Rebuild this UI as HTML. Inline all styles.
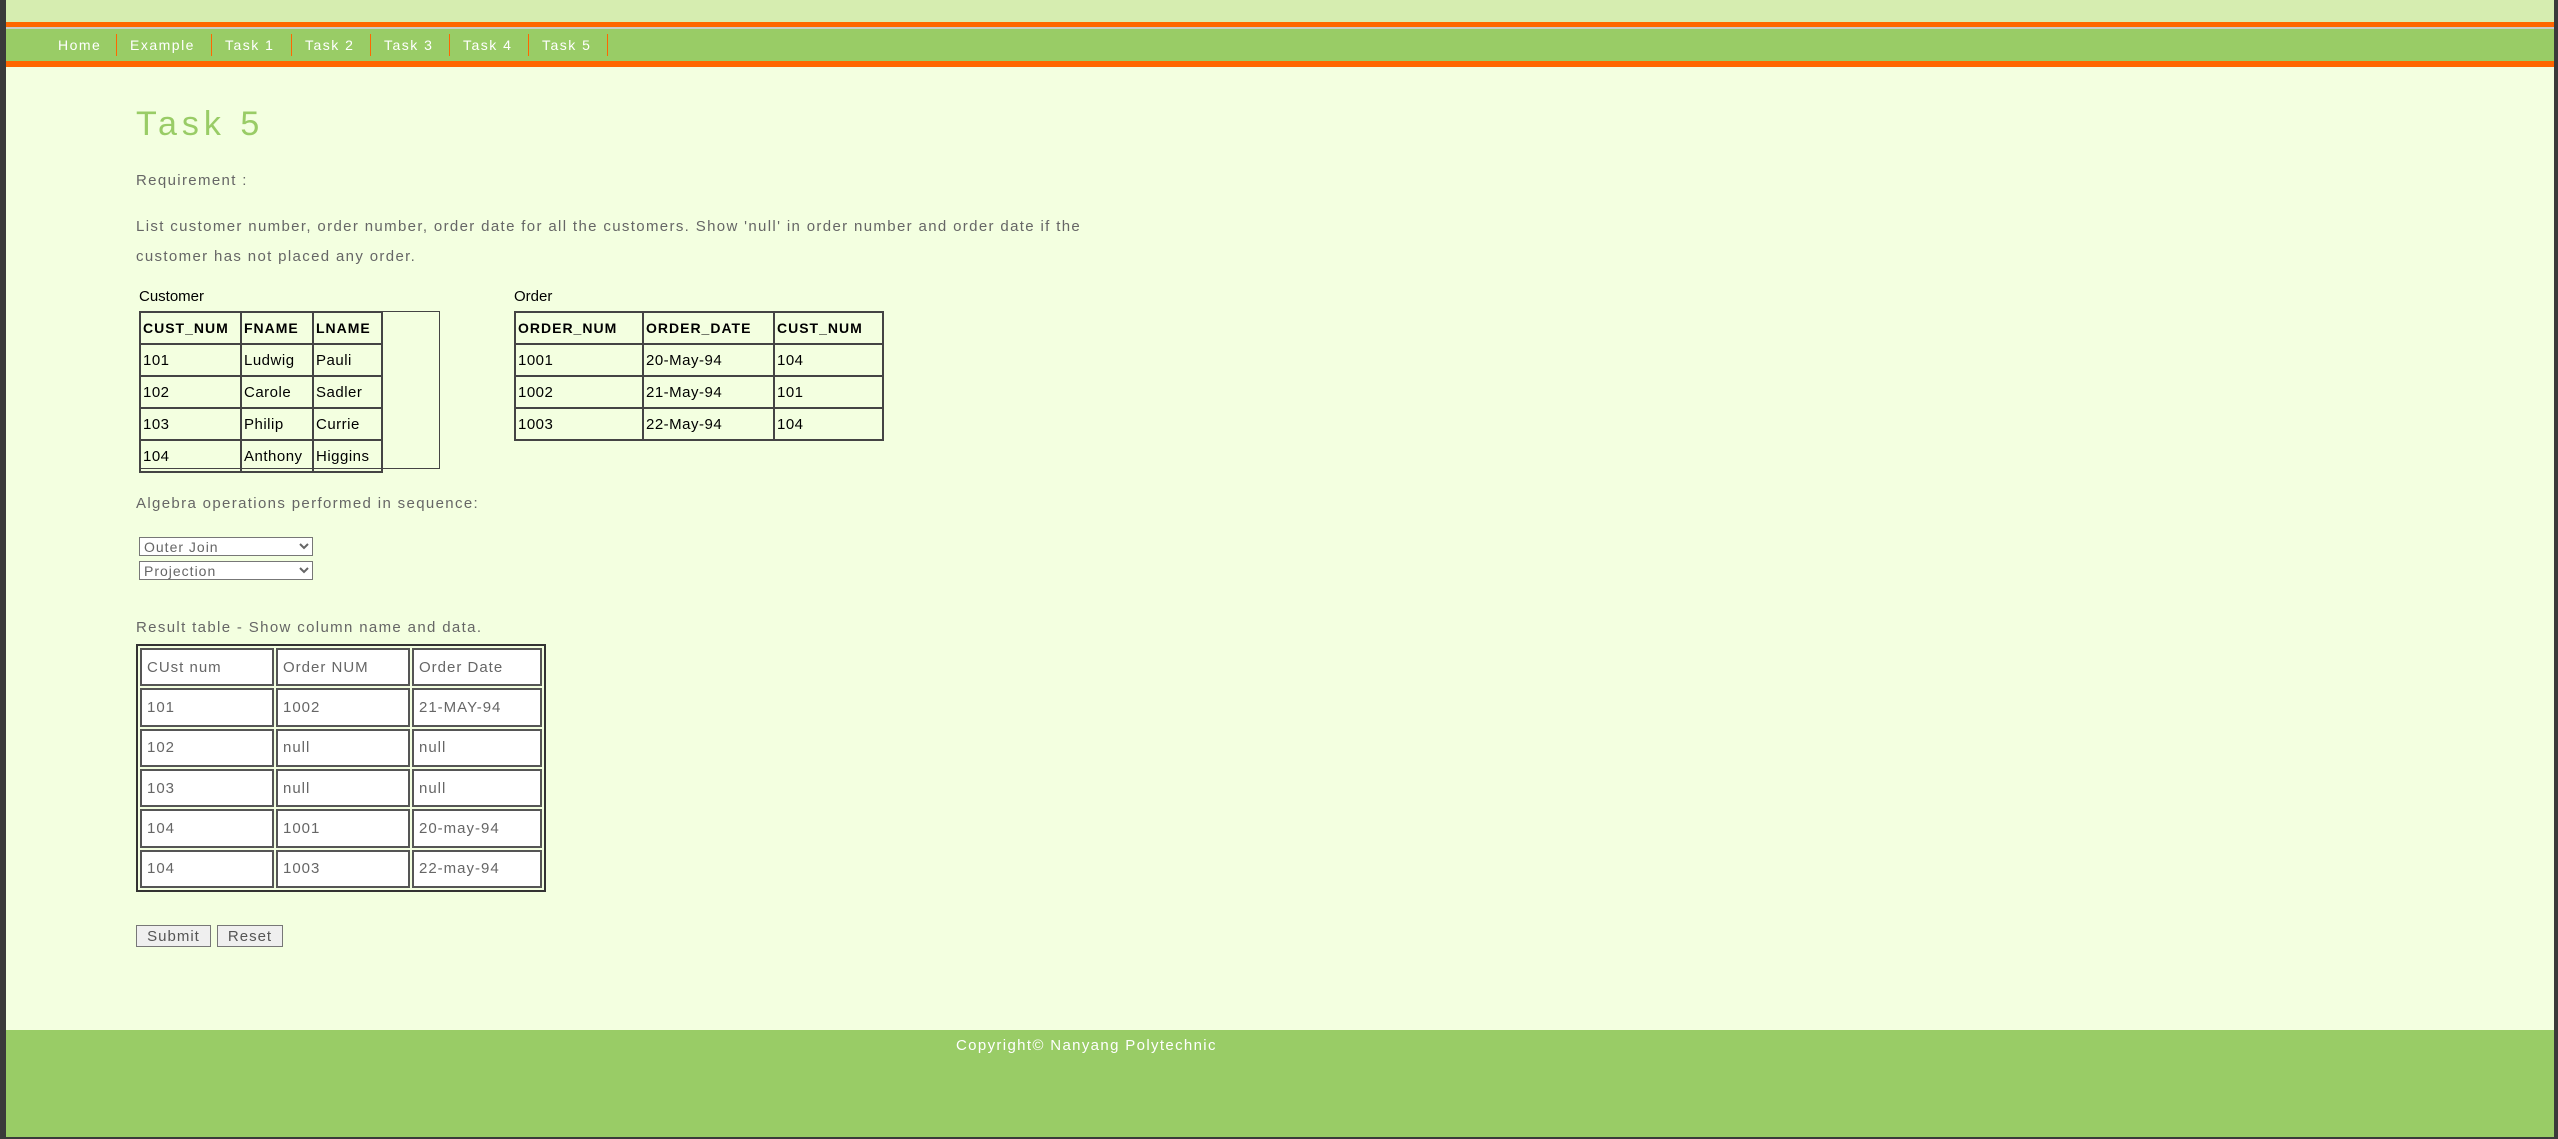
<!DOCTYPE html>
<html><head><meta charset="utf-8"><style>
*{margin:0;padding:0;box-sizing:border-box}
body{width:2558px;height:1139px;background:#3a3a3a;position:relative;overflow:hidden;font-family:"Liberation Sans",Arial,sans-serif}
#page{position:absolute;left:6px;top:0;width:2548px;height:1137px;background:#f3ffe0}
.a{position:absolute}
#top{left:0;top:0;width:100%;height:22px;background:#d6edb0}
#o1{left:0;top:22px;width:100%;height:5px;background:#ff6600}
#g1{left:0;top:27px;width:100%;height:2px;background:#c8ccc8}
#nav{left:0;top:29px;width:100%;height:32px;background:#99cc66}
#o2{left:0;top:61px;width:100%;height:6px;background:#ff6600}
.nv{position:absolute;top:0;height:32px;line-height:32px;color:#fff;font-size:14px;letter-spacing:1.5px}
.sep{position:absolute;top:5px;width:1px;height:22px;background:#ff6600}
h1{position:absolute;left:130px;top:105px;font-weight:normal;font-size:34px;letter-spacing:5px;color:#99cc66}
.t{color:#666;font-size:15px;letter-spacing:1.35px}
table{border-collapse:collapse;font-size:15px;color:#000;table-layout:fixed}
.dt td{border:2px solid #444;padding:0 2px;height:32px;letter-spacing:0.5px;white-space:nowrap}
.dt th{border:2px solid #444;padding:0 2px;height:32px;text-align:left;font-size:14px;letter-spacing:1px;white-space:nowrap}
.rt{border-collapse:separate;border-spacing:2px;border:2px solid #333;background:#f3ffe0}
.rt td{border:2px solid #555;border-style:double;background:#fff;color:#666;height:37px;padding:0 5px;letter-spacing:1px;font-size:15px}
select{position:absolute;left:133px;width:174px;height:19px;font-size:14px;color:#666;border:1px solid #777;background:#fff;font-family:"Liberation Sans",sans-serif;letter-spacing:1px}
button{position:absolute;top:925px;height:22px;font-size:15px;color:#555;background:#efefef;border:1px solid #777;letter-spacing:1px;font-family:"Liberation Sans",sans-serif}
#foot{left:0;top:1030px;width:100%;height:107px;background:#99cc66}
</style></head><body><div id="page">
<div class="a" id="top"></div><div class="a" id="o1"></div><div class="a" id="g1"></div>
<div class="a" id="nav">
<span class="nv" style="left:52px">Home</span><span class="sep" style="left:110px"></span>
<span class="nv" style="left:124px">Example</span><span class="sep" style="left:205px"></span>
<span class="nv" style="left:219px">Task 1</span><span class="sep" style="left:285px"></span>
<span class="nv" style="left:299px">Task 2</span><span class="sep" style="left:364px"></span>
<span class="nv" style="left:378px">Task 3</span><span class="sep" style="left:443px"></span>
<span class="nv" style="left:457px">Task 4</span><span class="sep" style="left:522px"></span>
<span class="nv" style="left:536px">Task 5</span><span class="sep" style="left:601px"></span>
</div>
<div class="a" id="o2"></div>
<h1>Task 5</h1>
<div class="a t" style="left:130px;top:172px">Requirement :</div>
<div class="a t" style="left:130px;top:212px;width:965px;line-height:30px">List customer number, order number, order date for all the customers. Show 'null' in order number and order date if the customer has not placed any order.</div>
<div class="a" style="left:133px;top:288px;font-size:15px">Customer</div>
<div class="a" style="left:133px;top:311px;width:301px;height:158px;border:1px solid #444"></div>
<table class="a dt" style="left:133px;top:311px"><tr><th style="width:101px">CUST_NUM</th><th style="width:72px">FNAME</th><th style="width:69px">LNAME</th></tr>
<tr><td>101</td><td>Ludwig</td><td>Pauli</td></tr><tr><td>102</td><td>Carole</td><td>Sadler</td></tr><tr><td>103</td><td>Philip</td><td>Currie</td></tr><tr><td>104</td><td>Anthony</td><td>Higgins</td></tr></table>
<div class="a" style="left:508px;top:288px;font-size:15px">Order</div>
<table class="a dt" style="left:508px;top:311px"><tr><th style="width:128px">ORDER_NUM</th><th style="width:131px">ORDER_DATE</th><th style="width:109px">CUST_NUM</th></tr>
<tr><td>1001</td><td>20-May-94</td><td>104</td></tr><tr><td>1002</td><td>21-May-94</td><td>101</td></tr><tr><td>1003</td><td>22-May-94</td><td>104</td></tr></table>
<div class="a t" style="left:130px;top:495px">Algebra operations performed in sequence:</div>
<select style="top:537px"><option>Outer Join</option></select>
<select style="top:561px"><option>Projection</option></select>
<div class="a t" style="left:130px;top:619px">Result table - Show column name and data.</div>
<table class="a rt" style="left:130px;top:644px;width:410px;height:248px">
<tr><td style="width:134px">CUst num</td><td style="width:134px">Order NUM</td><td>Order Date</td></tr>
<tr><td>101</td><td>1002</td><td>21-MAY-94</td></tr>
<tr><td>102</td><td>null</td><td>null</td></tr>
<tr><td>103</td><td>null</td><td>null</td></tr>
<tr><td>104</td><td>1001</td><td>20-may-94</td></tr>
<tr><td>104</td><td>1003</td><td>22-may-94</td></tr></table>
<button style="left:130px;width:75px">Submit</button>
<button style="left:211px;width:66px">Reset</button>
<div class="a" id="foot"><div class="a" style="left:950px;top:7px;color:#fff;font-size:15px;letter-spacing:1.35px">Copyright© Nanyang Polytechnic</div></div>
</div></body></html>
